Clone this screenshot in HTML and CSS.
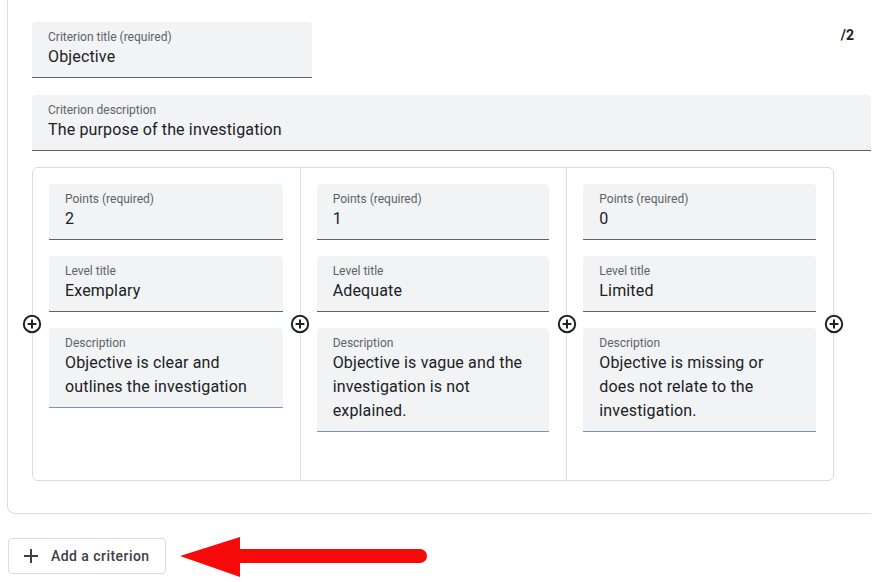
FILE: index.html
```html
<!DOCTYPE html>
<html lang="en">
<head>
<meta charset="utf-8">
<title>Rubric criterion</title>
<link rel="stylesheet" href="styles.css">
</head>
<body>
<div class="card">
  <div class="header">
    <div class="field title-field">
      <div class="label">Criterion title (required)</div>
      <div class="value">Objective</div>
    </div>
    <div class="points-total">/2</div>
  </div>
  <div class="field desc-field">
    <div class="label">Criterion description</div>
    <div class="value">The purpose of the investigation</div>
  </div>
  <div class="levels">
    <div class="level">
      <svg class="add-level" viewBox="0 0 20 20"><circle cx="10" cy="10" r="8.2"/><path d="M10 5.6v8.8M5.6 10h8.8"/></svg>
      <div class="field">
        <div class="label">Points (required)</div>
        <div class="value">2</div>
      </div>
      <div class="field">
        <div class="label">Level title</div>
        <div class="value">Exemplary</div>
      </div>
      <div class="field multi">
        <div class="label">Description</div>
        <div class="value">Objective is clear and outlines the investigation</div>
      </div>
    </div>
    <div class="level">
      <svg class="add-level" viewBox="0 0 20 20"><circle cx="10" cy="10" r="8.2"/><path d="M10 5.6v8.8M5.6 10h8.8"/></svg>
      <div class="field">
        <div class="label">Points (required)</div>
        <div class="value">1</div>
      </div>
      <div class="field">
        <div class="label">Level title</div>
        <div class="value">Adequate</div>
      </div>
      <div class="field multi">
        <div class="label">Description</div>
        <div class="value">Objective is vague and the investigation is not explained.</div>
      </div>
    </div>
    <div class="level">
      <svg class="add-level" viewBox="0 0 20 20"><circle cx="10" cy="10" r="8.2"/><path d="M10 5.6v8.8M5.6 10h8.8"/></svg>
      <svg class="add-level last" viewBox="0 0 20 20"><circle cx="10" cy="10" r="8.2"/><path d="M10 5.6v8.8M5.6 10h8.8"/></svg>
      <div class="field">
        <div class="label">Points (required)</div>
        <div class="value">0</div>
      </div>
      <div class="field">
        <div class="label">Level title</div>
        <div class="value">Limited</div>
      </div>
      <div class="field multi">
        <div class="label">Description</div>
        <div class="value">Objective is missing or does not relate to the investigation.</div>
      </div>
    </div>
  </div>
</div>
<div class="footer">
  <button class="add-btn" type="button">
    <svg class="plus" viewBox="0 0 14 14"><path d="M7 0v14M0 7h14"/></svg>
    <span>Add a criterion</span>
  </button>
  <svg class="arrow" viewBox="0 0 252 44"><polygon points="2,21 62,2 62,42"/><path d="M58 21H242"/></svg>
</div>
</body>
</html>
```

FILE: styles.css
```css
html, body {
  margin: 0;
  padding: 0;
  background: #ffffff;
}
body {
  font-family: Roboto, "Liberation Sans", Arial, sans-serif;
  color: #202124;
  width: 876px;
  height: 582px;
  overflow: hidden;
}
.card {
  margin-left: 7px;
  width: 839px;
  padding: 22px 0 32px 24px;
  border-left: 1px solid #dadce0;
  border-bottom: 1px solid #dadce0;
  border-bottom-left-radius: 8px;
}
.header {
  display: flex;
  justify-content: space-between;
  align-items: flex-start;
}
.points-total {
  font-size: 14px;
  font-weight: 700;
  line-height: 20px;
  margin-top: 3px;
  padding-right: 17px;
  color: #202124;
}
.field {
  background: #f1f3f4;
  border-radius: 4px 4px 0 0;
  padding: 7px 16px 8px 16px;
  border-bottom: 1px solid #5f6368;
}
.title-field {
  width: 248px;
}
.desc-field {
  margin-top: 17px;
}
.label {
  font-size: 12px;
  line-height: 16px;
  color: #5f6368;
}
.value {
  font-size: 16px;
  line-height: 24px;
  letter-spacing: 0.15px;
  color: #202124;
}
.levels {
  margin-top: 16px;
  width: 800px;
  border: 1px solid #dadce0;
  border-radius: 6px;
  display: grid;
  grid-template-columns: 1fr 1fr 1fr;
}
.level {
  position: relative;
  padding: 16px 17px 48px 16px;
  display: flex;
  flex-direction: column;
  gap: 16px;
}
.level + .level {
  border-left: 1px solid #dadce0;
}
.field.multi {
  border-bottom-color: #7f95b4;
}
.add-level {
  position: absolute;
  top: 146px;
  left: -11px;
  width: 20px;
  height: 20px;
  background: #ffffff;
  border-radius: 50%;
  fill: none;
  stroke: #202124;
  stroke-width: 2;
}
.level + .level .add-level {
  left: -10.5px;
}
.level .add-level.last {
  left: auto;
  right: -11px;
}
.footer {
  position: relative;
  padding: 24px 0 0 8px;
}
.add-btn {
  display: inline-flex;
  align-items: center;
  gap: 13px;
  height: 36px;
  padding: 0 15px 0 15px;
  background: #ffffff;
  border: 1px solid #dadce0;
  border-radius: 4px;
  font-family: Roboto, "Liberation Sans", Arial, sans-serif;
  font-size: 14px;
  font-weight: 500;
  color: #3c4043;
  letter-spacing: 0.45px;
}
.plus {
  width: 14px;
  height: 14px;
  fill: none;
  stroke: #3c4043;
  stroke-width: 2;
}
.arrow {
  position: absolute;
  left: 178px;
  top: 21px;
  width: 252px;
  height: 44px;
}
.arrow polygon {
  fill: #f70a0a;
}
.arrow path {
  stroke: #f70a0a;
  stroke-width: 14;
  stroke-linecap: round;
  fill: none;
}
```
